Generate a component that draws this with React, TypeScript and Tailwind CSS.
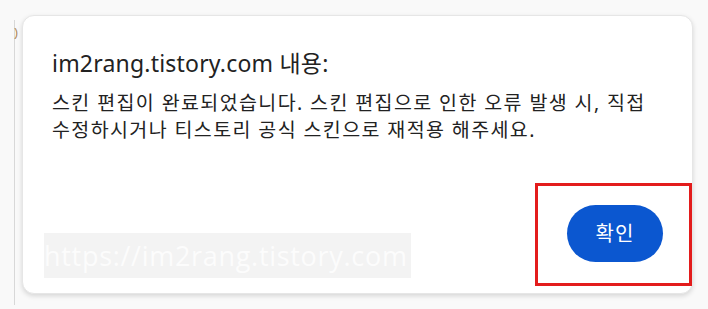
export default function App() {
  return (
    <div
      className="relative w-[708px] h-[309px] overflow-hidden bg-[#f9f9f9]"
      style={{ fontFamily: '"Noto Sans", "Noto Sans CJK KR", sans-serif' }}
    >
      {/* page behind the dialog */}
      <div className="absolute left-[14px] top-[20px] w-[3px] h-[285px] border-l border-[#d8d8d8]" />
      <div className="absolute left-[14px] top-[26px] text-[13px] text-[#b08a5a] leading-none">)</div>

      {/* alert dialog */}
      <div className="absolute left-[22px] top-[15px] w-[671px] h-[279px] flex flex-col rounded-[12px] bg-white border border-[#e6e6e6] shadow-[0_2px_5px_rgba(0,0,0,0.14)] px-[29px] pt-[33px] pb-[31px] text-[#222222]">
        <h1 className="text-[23px] leading-[28px] tracking-[0.2px]">im2rang.tistory.com 내용:</h1>
        <p className="mt-[13px] text-[19.5px] leading-[26.5px] tracking-[1.4px] whitespace-nowrap">
          스킨 편집이 완료되었습니다. 스킨 편집으로 인한 오류 발생 시, 직접
          <br />
          수정하시거나 티스토리 공식 스킨으로 재적용 해주세요.
        </p>
        <div className="flex-1" />
        <div className="flex justify-end">
          <button className="w-[96px] h-[57px] rounded-full bg-[#0b57d0] text-white text-[20px] tracking-[1px]">
            확인
          </button>
        </div>
      </div>

      {/* watermark */}
      <div className="absolute left-[44px] top-[233px] w-[367px] h-[45px] bg-[#f3f3f3] flex items-center overflow-hidden">
        <span
          className="text-[27px] leading-none tracking-[0.7px] text-[#fcfcfc] whitespace-nowrap"
          style={{ fontFamily: '"Open Sans", sans-serif' }}
        >
          https://im2rang.tistory.com
        </span>
      </div>

      {/* highlight annotation */}
      <div className="absolute left-[535px] top-[183px] w-[157px] h-[103px] border-[3px] border-[#e31c1c]" />
    </div>
  );
}
